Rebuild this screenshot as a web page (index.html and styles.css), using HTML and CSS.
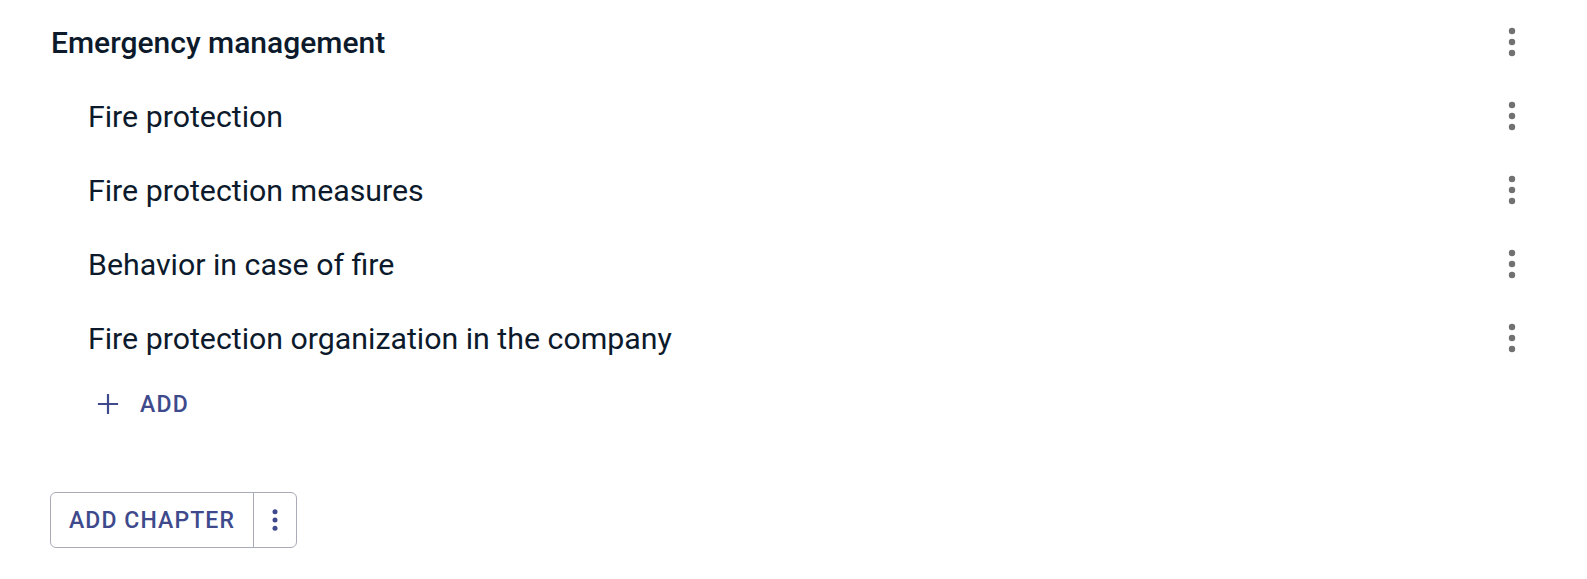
FILE: index.html
```html
<!DOCTYPE html>
<html>
<head>
<meta charset="utf-8">
<link rel="stylesheet" href="styles.css">
</head>
<body>
<div class="outline">
  <div class="row heading">
    <span class="title">Emergency management</span>
    <button class="more" aria-label="More"><svg viewBox="0 0 24 36"><circle cx="12" cy="7" r="3.2"/><circle cx="12" cy="18" r="3.2"/><circle cx="12" cy="29" r="3.2"/></svg></button>
  </div>
  <div class="row item">
    <span class="label">Fire protection</span>
    <button class="more" aria-label="More"><svg viewBox="0 0 24 36"><circle cx="12" cy="7" r="3.2"/><circle cx="12" cy="18" r="3.2"/><circle cx="12" cy="29" r="3.2"/></svg></button>
  </div>
  <div class="row item">
    <span class="label">Fire protection measures</span>
    <button class="more" aria-label="More"><svg viewBox="0 0 24 36"><circle cx="12" cy="7" r="3.2"/><circle cx="12" cy="18" r="3.2"/><circle cx="12" cy="29" r="3.2"/></svg></button>
  </div>
  <div class="row item">
    <span class="label">Behavior in case of fire</span>
    <button class="more" aria-label="More"><svg viewBox="0 0 24 36"><circle cx="12" cy="7" r="3.2"/><circle cx="12" cy="18" r="3.2"/><circle cx="12" cy="29" r="3.2"/></svg></button>
  </div>
  <div class="row item">
    <span class="label">Fire protection organization in the company</span>
    <button class="more" aria-label="More"><svg viewBox="0 0 24 36"><circle cx="12" cy="7" r="3.2"/><circle cx="12" cy="18" r="3.2"/><circle cx="12" cy="29" r="3.2"/></svg></button>
  </div>
  <div class="add-row">
    <button class="add-btn">
      <svg viewBox="0 0 24 24"><path d="M12 1v22M1 12h22" stroke="currentColor" stroke-width="2.4" fill="none"/></svg>
      <span>ADD</span>
    </button>
  </div>
  <div class="chapter">
    <div class="split">
      <button class="split-main">ADD CHAPTER</button>
      <button class="split-more" aria-label="More"><svg viewBox="0 0 24 36"><circle cx="12" cy="8" r="3"/><circle cx="12" cy="18" r="3"/><circle cx="12" cy="28" r="3"/></svg></button>
    </div>
  </div>
</div>
</body>
</html>
```
FILE: styles.css
```css
* { box-sizing: border-box; }
html, body { margin: 0; background: #fff; }
body { font-family: Roboto, "Liberation Sans", sans-serif; color: #0c1a2c; }
.outline { padding: 5px 51px 0 51px; }
.row { height: 74px; display: flex; align-items: center; justify-content: space-between; }
.title { font-size: 30px; font-weight: 500; }
.item .label { font-size: 30.3px; font-weight: 400; padding-left: 37px; }
.more { width: 48px; height: 48px; border: 0; background: none; padding: 0; display: flex; align-items: center; justify-content: center; }
.more svg { fill: #717171; width: 24px; height: 36px; }
.add-row { height: 58px; display: flex; align-items: center; padding-left: 46px; }
.add-btn { display: flex; align-items: center; gap: 21px; border: 0; background: none; padding: 0; color: #3e4a8c; font-family: inherit; font-size: 23px; font-weight: 500; letter-spacing: 1.2px; }
.add-btn svg { width: 22px; height: 22px; }
.chapter { padding-top: 59px; }
.split { display: inline-flex; height: 56px; border: 1px solid #a9abb6; border-radius: 6px; margin-left: -1px; }
.split-main { width: 203px; border: 0; background: none; font-family: inherit; font-size: 23px; font-weight: 500; letter-spacing: 1.1px; color: #3e4a8c; padding: 0; border-right: 1px solid #a9abb6; }
.split-more { width: 42px; border: 0; background: none; padding: 0; display: flex; align-items: center; justify-content: center; }
.split-more svg { fill: #3e4a8c; width: 20px; height: 30px; }
```
